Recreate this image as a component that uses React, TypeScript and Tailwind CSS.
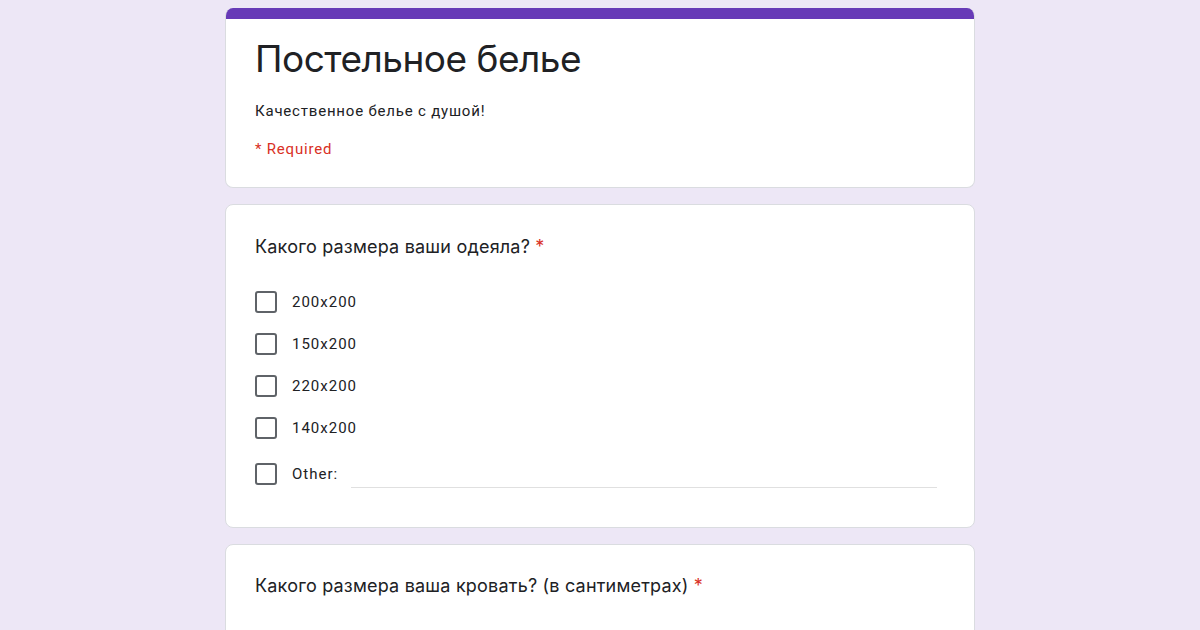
const options = ['200x200', '150x200', '220x200', '140x200'];

function Checkbox() {
  return <div className="w-[22px] h-[22px] shrink-0 rounded-[3px] border-2 border-[#5f6368]" />;
}

export default function App() {
  return (
    <div className="w-[1200px] h-[630px] overflow-hidden bg-[#ede7f6] font-['Roboto',sans-serif] text-[#202124]">
      <div className="mx-auto w-[750px] pt-[8px] flex flex-col gap-[16px]">
        <div className="bg-white rounded-[8px] border border-[#dadce0] border-t-0 overflow-hidden">
          <div className="h-[11px] bg-[#673ab7]" />
          <div className="px-[29px] pt-[18px] pb-[28px]">
            <div className="text-[37px] leading-[44px] font-['Inter',sans-serif] tracking-[-0.5px] text-[#202124]">
              Постельное белье
            </div>
            <div className="mt-[20px] text-[15px] leading-[20px] tracking-[0.8px]">Качественное белье с душой!</div>
            <div className="mt-[18px] text-[15px] leading-[20px] tracking-[0.8px] text-[#d93025]">* Required</div>
          </div>
        </div>

        <div className="bg-white rounded-[8px] border border-[#dadce0] px-[29px] pt-[29px] pb-[42px]">
          <div className="text-[18px] leading-[26px] tracking-[0.2px] font-['Inter',sans-serif]">
            Какого размера ваши одеяла? <span className="text-[#d93025]">*</span>
          </div>
          <div className="mt-[31px] flex flex-col gap-[20px]">
            {options.map((o) => (
              <div key={o} className="flex items-center gap-[15px] h-[22px]">
                <Checkbox />
                <span className="text-[15px] tracking-[1px]">{o}</span>
              </div>
            ))}
            <div className="flex items-center gap-[13px] h-[22px] mt-[4px]">
              <Checkbox />
              <span className="text-[15px] tracking-[1px] ml-[2px]">Other:</span>
              <div className="flex-1 self-end mr-[8px] h-[22px] border-b border-[#e0e0e0] translate-y-[3px]" />
            </div>
          </div>
        </div>

        <div className="bg-white rounded-[8px] border border-[#dadce0] px-[29px] pt-[28px] h-[200px]">
          <div className="text-[18px] leading-[26px] tracking-[0.2px] font-['Inter',sans-serif]">
            Какого размера ваша кровать? (в сантиметрах) <span className="text-[#d93025]">*</span>
          </div>
        </div>
      </div>
    </div>
  );
}
